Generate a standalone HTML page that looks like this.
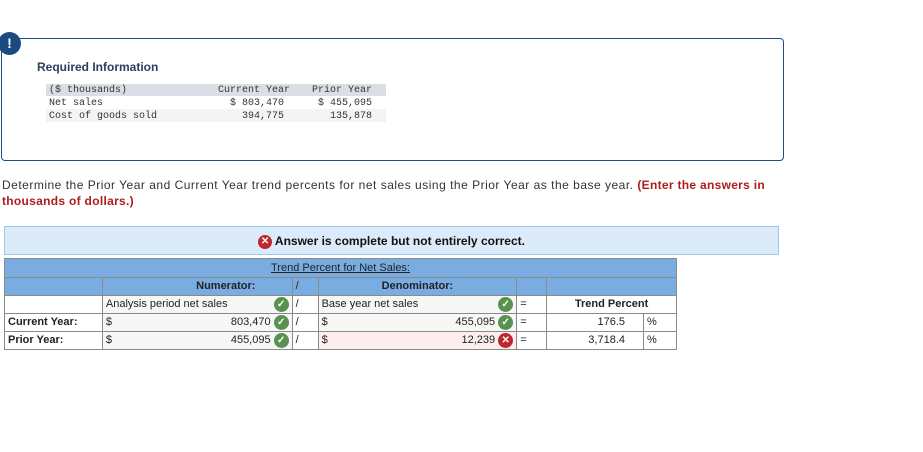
<!DOCTYPE html>
<html><head><meta charset="utf-8"><style>
*{margin:0;padding:0;box-sizing:border-box}
body{width:923px;height:452px;background:#fff;position:relative;font-family:"Liberation Sans",Arial,sans-serif;overflow:hidden}
.a{position:absolute}
.box{left:1px;top:38px;width:783px;height:123px;border:1.5px solid #1f4f8a;border-radius:4px}
.alert{left:-2px;top:32px;width:23px;height:23px;border-radius:50%;background:#1a4a80;color:#fff;font-weight:bold;font-size:14px;text-align:center;line-height:23px}
.mono{font-family:"Liberation Mono",monospace;font-size:10px;color:#333;line-height:13px;white-space:pre}
.t{position:absolute;border-collapse:collapse;font-size:11px;color:#222}
.t td{border:1px solid #8a8a8a;padding:0 3px;height:18px;line-height:17px;white-space:nowrap;vertical-align:middle}
.h{background:#79ade2}
.ok,.bad{display:inline-block;width:15px;height:15px;border-radius:50%;color:#fff;font-size:10px;line-height:15px;text-align:center;font-weight:bold;vertical-align:middle}
.ok{background:#5a9150}.bad{background:#c0272d}
.r{float:right;line-height:17px}
</style></head><body>
<div class="a box"></div>
<div class="a alert">!</div>
<div class="a" style="left:37px;top:60px;font-size:12px;font-weight:bold;color:#2b3e5c">Required Information</div>
<div class="a" style="left:46px;top:84px;width:340px;height:12px;background:#dcdee5"></div>
<div class="a" style="left:46px;top:109px;width:340px;height:13px;background:#f4f4f4"></div>
<div class="a mono" style="left:49px;top:84px">($ thousands)
Net sales
Cost of goods sold</div>
<div class="a mono" style="left:216px;top:84px;text-align:right;width:74px">Current Year
$ 803,470 
394,775 </div>
<div class="a mono" style="left:300px;top:84px;text-align:right;width:72px">Prior Year
$ 455,095
135,878</div>
<div class="a" style="left:2px;top:177px;font-size:12px;color:#333;line-height:16px;width:800px;letter-spacing:0.5px;white-space:nowrap">Determine the Prior Year and Current Year trend percents for net sales using the Prior Year as the base year. <b style="color:#b01c1c;letter-spacing:0.3px">(Enter the answers in<br>thousands of dollars.)</b></div>
<div class="a" style="left:4px;top:226px;width:775px;height:29px;background:#dcebf9;border:1px solid #9ec6ea;text-align:center;font-size:12px;font-weight:bold;line-height:28px;color:#111"><span class="bad" style="width:14px;height:14px;line-height:14px">✕</span> Answer is complete but not entirely correct.</div>
<table class="t" style="left:4px;top:258px;width:673px">
<colgroup><col style="width:98px"><col style="width:190px"><col style="width:26px"><col style="width:199px"><col style="width:30px"><col style="width:97px"><col style="width:33px"></colgroup>
<tr class="h"><td colspan="7" style="text-align:center;height:19px"><u>Trend Percent for Net Sales:</u></td></tr>
<tr class="h"><td></td><td style="text-align:center;font-weight:bold;padding-left:60px">Numerator:</td><td>/</td><td style="text-align:center;font-weight:bold">Denominator:</td><td></td><td colspan="2"></td></tr>
<tr><td></td><td style="background:#f6f8f6">Analysis period net sales<span class="r"><span class="ok">✓</span></span></td><td>/</td><td style="background:#f6f8f6">Base year net sales<span class="r"><span class="ok">✓</span></span></td><td>=</td><td colspan="2" style="text-align:center;font-weight:bold">Trend Percent</td></tr>
<tr><td style="font-weight:bold">Current Year:</td><td style="background:#f6f8f6">$<span class="r">803,470 <span class="ok">✓</span></span></td><td>/</td><td style="background:#f6f8f6">$<span class="r">455,095 <span class="ok">✓</span></span></td><td>=</td><td style="text-align:right;padding-right:18px">176.5</td><td>%</td></tr>
<tr><td style="font-weight:bold">Prior Year:</td><td style="background:#f6f8f6">$<span class="r">455,095 <span class="ok">✓</span></span></td><td>/</td><td style="background:#fdeeee">$<span class="r">12,239 <span class="bad">✕</span></span></td><td>=</td><td style="text-align:right;padding-right:18px">3,718.4</td><td>%</td></tr>
</table>
</body></html>
